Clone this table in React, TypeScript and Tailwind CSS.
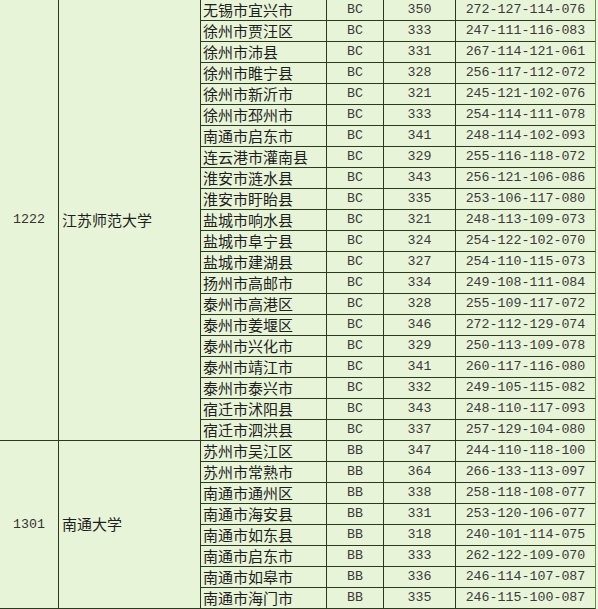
import React from "react";

type Row = [string, string, string, string];

const g1222: Row[] = [
  ["无锡市宜兴市", "BC", "350", "272-127-114-076"],
  ["徐州市贾汪区", "BC", "333", "247-111-116-083"],
  ["徐州市沛县", "BC", "331", "267-114-121-061"],
  ["徐州市睢宁县", "BC", "328", "256-117-112-072"],
  ["徐州市新沂市", "BC", "321", "245-121-102-076"],
  ["徐州市邳州市", "BC", "333", "254-114-111-078"],
  ["南通市启东市", "BC", "341", "248-114-102-093"],
  ["连云港市灌南县", "BC", "329", "255-116-118-072"],
  ["淮安市涟水县", "BC", "343", "256-121-106-086"],
  ["淮安市盱眙县", "BC", "335", "253-106-117-080"],
  ["盐城市响水县", "BC", "321", "248-113-109-073"],
  ["盐城市阜宁县", "BC", "324", "254-122-102-070"],
  ["盐城市建湖县", "BC", "327", "254-110-115-073"],
  ["扬州市高邮市", "BC", "334", "249-108-111-084"],
  ["泰州市高港区", "BC", "328", "255-109-117-072"],
  ["泰州市姜堰区", "BC", "346", "272-112-129-074"],
  ["泰州市兴化市", "BC", "329", "250-113-109-078"],
  ["泰州市靖江市", "BC", "341", "260-117-116-080"],
  ["泰州市泰兴市", "BC", "332", "249-105-115-082"],
  ["宿迁市沭阳县", "BC", "343", "248-110-117-093"],
  ["宿迁市泗洪县", "BC", "337", "257-129-104-080"],
];

const g1301: Row[] = [
  ["苏州市吴江区", "BB", "347", "244-110-118-100"],
  ["苏州市常熟市", "BB", "364", "266-133-113-097"],
  ["南通市通州区", "BB", "338", "258-118-108-077"],
  ["南通市海安县", "BB", "331", "253-120-106-077"],
  ["南通市如东县", "BB", "318", "240-101-114-075"],
  ["南通市启东市", "BB", "333", "262-122-109-070"],
  ["南通市如皋市", "BB", "336", "246-114-107-087"],
  ["南通市海门市", "BB", "335", "246-115-100-087"],
];

const cjk = "font-['Noto_Sans_CJK_SC','Noto_Sans',sans-serif]";
const mono = "font-['Liberation_Mono','DejaVu_Sans_Mono',monospace]";
const cell = "border-r border-b border-[#2b3a1f] p-0 align-middle";

function Group({ code, name, rows }: { code: string; name: string; rows: Row[] }) {
  return (
    <>
      {rows.map((r, i) => (
        <tr key={i} className="h-[21px]">
          {i === 0 && (
            <>
              <td rowSpan={rows.length} className={`${cell} ${mono} text-center text-[13.3px] text-[#333]`}>
                {code}
              </td>
              <td rowSpan={rows.length} className={`${cell} ${cjk} pl-[3px] text-[15px] text-[#1e1e1e]`}>
                {name}
              </td>
            </>
          )}
          <td className={`${cell} ${cjk} pl-[2px] text-[15px] leading-[20px] text-[#1e1e1e] whitespace-nowrap`}>{r[0]}</td>
          <td className={`${cell} ${mono} text-center text-[13.3px] text-[#3a3a3a]`}>{r[1]}</td>
          <td className={`${cell} ${mono} text-center text-[13.3px] text-[#3a3a3a]`}>{r[2]}</td>
          <td className={`border-r border-r-[#5c9c3e] border-b border-b-[#2b3a1f] p-0 align-middle ${mono} text-center text-[13.3px] text-[#3a3a3a]`}>
            {r[3]}
          </td>
        </tr>
      ))}
    </>
  );
}

export default function App() {
  return (
    <div className="w-[598px] h-[609px] overflow-hidden bg-[#eef7e4]">
      <table className="table-fixed border-separate border-spacing-0 w-[596px] bg-[#e8f4d8]">
        <colgroup>
          <col className="w-[59px]" />
          <col className="w-[142px]" />
          <col className="w-[126px]" />
          <col className="w-[57px]" />
          <col className="w-[72px]" />
          <col className="w-[140px]" />
        </colgroup>
        <tbody>
          <Group code="1222" name="江苏师范大学" rows={g1222} />
          <Group code="1301" name="南通大学" rows={g1301} />
        </tbody>
      </table>
    </div>
  );
}
